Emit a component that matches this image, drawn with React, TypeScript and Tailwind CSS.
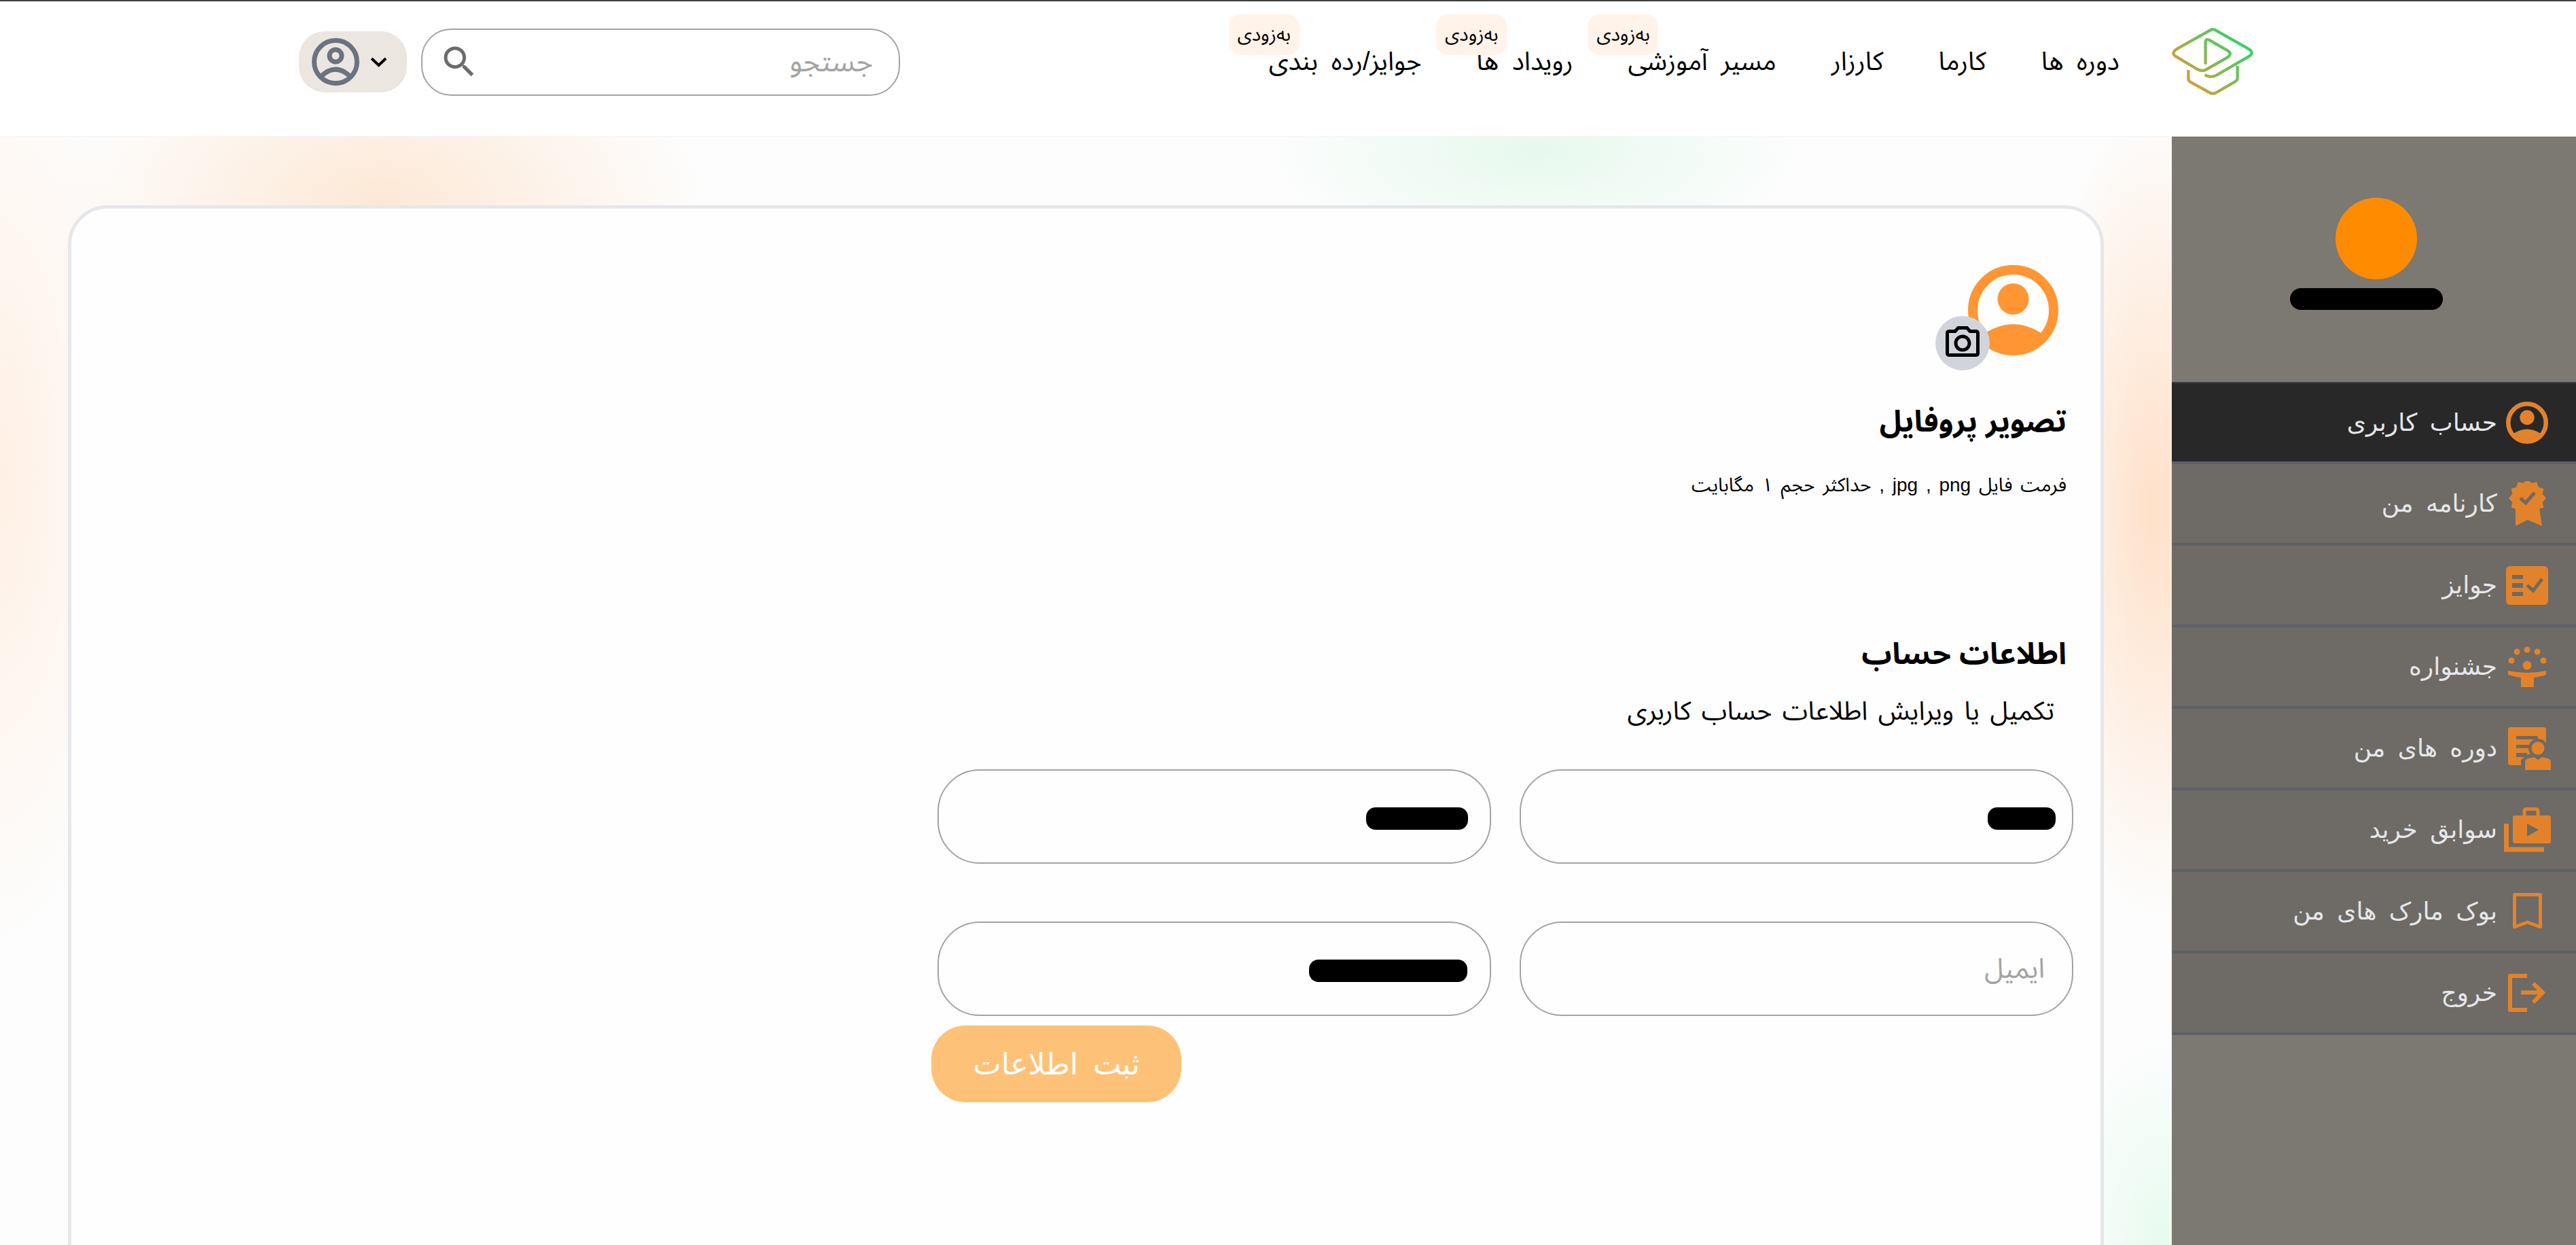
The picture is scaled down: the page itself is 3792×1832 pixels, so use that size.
import { MdOutlinePhotoCamera, MdSearch } from 'react-icons/md';

const navItems = [
  { label: 'دوره ها' },
  { label: 'کارما' },
  { label: 'کارزار' },
  { label: 'مسیر آموزشی', soon: true },
  { label: 'رویداد ها', soon: true },
  { label: 'جوایز/رده بندی', soon: true },
];

const burst = Array.from({ length: 24 }, (_, i) => {
  const r = i % 2 === 0 ? 27.5 : 23;
  const a = (i * Math.PI) / 12 - Math.PI / 2;
  return `${(27.5 + r * Math.cos(a)).toFixed(1)},${(25 + r * Math.sin(a)).toFixed(1)}`;
}).join(' ');

function Logo() {
  return (
    <svg viewBox="100 115 400 320" className="w-[133px] h-[106px] shrink-0" fill="none">
      <defs>
        <linearGradient id="logo" gradientUnits="userSpaceOnUse" x1="180" y1="420" x2="440" y2="180">
          <stop offset="0" stopColor="#e39a36" />
          <stop offset="1" stopColor="#2fd46e" />
        </linearGradient>
      </defs>
      <path
        d="M266 338 Q288 350 312 338 L455 255 Q484 238 455 220 L310 138 Q297 130 284 138 L135 222 Q108 240 135 256 L230 312 Q250 322 268 312 L362 258 Q385 242 362 228 L282 182 Q264 172 264 192 L264 284"
        stroke="url(#logo)"
        strokeWidth="13"
        strokeLinecap="round"
      />
      <path
        d="M188 314 V352 Q188 362 198 368 L285 416 Q298 422 310 416 L396 366 Q406 360 406 350 V295"
        stroke="url(#logo)"
        strokeWidth="13"
      />
    </svg>
  );
}

function UserSolid({ className }: { className: string }) {
  return (
    <svg viewBox="0 0 133 133" className={className} fill="currentColor">
      <circle cx="66.5" cy="66.5" r="59.5" fill="none" stroke="currentColor" strokeWidth="14" />
      <circle cx="66.5" cy="50" r="23" />
      <path d="M25 100 Q66.5 74 108 100 A53 53 0 0 1 25 100Z" />
    </svg>
  );
}

function UserOutline() {
  return (
    <svg viewBox="0 0 70 70" className="w-[70px] h-[70px]" fill="none" stroke="#6b7280" strokeWidth="7">
      <circle cx="35" cy="35" r="31.5" />
      <circle cx="35" cy="26" r="9" />
      <path d="M13 57 Q35 35 57 57" />
    </svg>
  );
}

function Ribbon() {
  return (
    <svg viewBox="0 0 55 66" className="w-[55px] h-[66px]">
      <path d="M10 40 H45 L49 66 L27.5 57 L10 66Z" fill="#e2832c" />
      <polygon points={burst} fill="#e2832c" />
      <path d="M17 25 L25 32 L38 17" fill="none" stroke="#6e6a65" strokeWidth="5" />
    </svg>
  );
}

function TasksBox() {
  return (
    <svg viewBox="0 0 62 57" className="w-[62px] h-[57px]">
      <rect width="62" height="57" rx="6" fill="#e2832c" />
      <path d="M9 13 H25 V19 H9Z M9 25 H25 V32 H9Z M9 38 H25 V44 H9Z" fill="#6e6a65" />
      <path d="M31 28 L40 36 L53 19" fill="none" stroke="#6e6a65" strokeWidth="5" />
    </svg>
  );
}

function Festival() {
  return (
    <svg viewBox="0 0 57 60" className="w-[57px] h-[60px]" fill="#e2832c">
      <circle cx="13" cy="8" r="4.5" />
      <circle cx="28" cy="5" r="4.5" />
      <circle cx="43" cy="8" r="4.5" />
      <circle cx="5" cy="21" r="4.5" />
      <circle cx="52" cy="21" r="4.5" />
      <circle cx="28" cy="28" r="6.5" />
      <path d="M0 36 Q14 39 28 39 Q42 39 56 36 V42 Q45 45 38 46 V60 H19 V46 Q10 45 0 42Z" />
    </svg>
  );
}

function Courses() {
  return (
    <svg viewBox="0 0 63 63" className="w-[63px] h-[63px] translate-x-[3px]">
      <rect width="56" height="56" rx="4" fill="#e2832c" />
      <path d="M12 13 H44 V18 H12Z M12 26 H34 V31 H12Z M12 38 H28 V44 H12Z" fill="#6e6a65" />
      <circle cx="44" cy="31" r="14" fill="#6e6a65" />
      <path d="M19 63 V48 L30 40 H56 V56 H63 V63Z" fill="#6e6a65" />
      <circle cx="44" cy="31" r="9.5" fill="#e2832c" />
      <path d="M25 63 V51 Q25 47 30 46 L38 44 L44 48 L50 44 L58 46 Q63 47 63 51 V63Z" fill="#e2832c" />
    </svg>
  );
}

function Briefcase() {
  return (
    <svg viewBox="0 0 69 66" className="w-[69px] h-[66px]">
      <rect x="30" y="2.5" width="20" height="12" rx="3" fill="none" stroke="#e2832c" strokeWidth="5" />
      <rect x="13" y="12" width="56" height="41" rx="3" fill="#e2832c" />
      <path d="M34 24 L51 33 L34 43Z" fill="#6e6a65" />
      <path d="M3.5 24 V62 H59" fill="none" stroke="#e2832c" strokeWidth="7" />
    </svg>
  );
}

function Bookmark() {
  return (
    <svg viewBox="0 0 43 55" className="w-[43px] h-[55px]">
      <path d="M2.5 50 V2.5 H40.5 V50 L21.5 43Z" fill="none" stroke="#e2832c" strokeWidth="5" strokeLinejoin="round" />
    </svg>
  );
}

function Logout() {
  return (
    <svg viewBox="0 0 56 56" className="w-[56px] h-[56px]" fill="none" stroke="#e2832c" strokeWidth="6">
      <path d="M28 3 H3 V53 H28" strokeLinejoin="round" />
      <path d="M19 27.5 H50 M37 14 L51 27.5 L37 42" />
    </svg>
  );
}

const sideItems = [
  { label: 'حساب کاربری', icon: <UserSolid className="w-[62px] h-[62px] text-[#e2832c]" />, active: true },
  { label: 'کارنامه من', icon: <Ribbon /> },
  { label: 'جوایز', icon: <TasksBox /> },
  { label: 'جشنواره', icon: <Festival /> },
  { label: 'دوره های من', icon: <Courses /> },
  { label: 'سوابق خرید', icon: <Briefcase /> },
  { label: 'بوک مارک های من', icon: <Bookmark /> },
  { label: 'خروج', icon: <Logout /> },
];

export default function App() {
  return (
    <div
      dir="rtl"
      className="h-screen overflow-hidden flex flex-col bg-[#fdfdfd] text-black font-['Liberation_Sans','Noto_Sans_Arabic',sans-serif]"
    >
      {/* Header */}
      <header className="h-[201px] shrink-0 bg-white border-t-2 border-[#404040] border-b border-b-[#f5f5f5] flex items-center pr-[473px] pl-[440px]">
        <div className="-mt-[22px] flex items-center ml-[72px]">
          <div className="-mr-[6px]">
            <Logo />
          </div>
        </div>
        <nav className="flex items-center gap-[81px] -mt-[22px]">
          {navItems.map((item) => (
            <div key={item.label} className="relative text-[38px] leading-[54px] whitespace-nowrap [word-spacing:9px]">
              {item.label}
              {item.soon && (
                <span className="absolute -left-[59px] -top-[42px] w-[104px] h-[60px] rounded-[18px] bg-[#fff3ea] flex items-center justify-center text-[28px] leading-none">
                  بەزودی
                </span>
              )}
            </div>
          ))}
        </nav>
        <div className="mr-auto flex items-center gap-[21px] -mt-[20px]">
          <div className="relative w-[705px] h-[99px]">
            <input
              placeholder="جستجو"
              className="w-full h-full rounded-[44px] border-2 border-[#a3a3a3] pr-[38px] text-[42px] outline-none placeholder:text-[#a3a3a3]"
            />
            <MdSearch className="absolute left-[26px] top-[19px] text-[#6b6b6b]" size={60} />
          </div>
          <div className="w-[159px] h-[90px] rounded-[38px] bg-[#ebe6e0] flex items-center justify-between pr-[29px] pl-[19px]" dir="ltr">
            <UserOutline />
            <svg viewBox="0 0 25 15" className="w-[25px] h-[15px]" fill="none" stroke="#000" strokeWidth="4">
              <path d="M2 2 L12.5 12 L23 2" />
            </svg>
          </div>
        </div>
      </header>

      <div className="flex-1 flex min-h-0">
        {/* Sidebar */}
        <aside className="w-[595px] shrink-0 bg-[#7c7872] text-[#e5e7eb] font-['DejaVu_Sans',sans-serif]">
          <div className="h-[361px] flex flex-col items-center pt-[90px] pl-[6px]">
            <div className="w-[120px] h-[120px] rounded-full bg-[#ff8c00]" />
            <div className="mt-[13px] -ml-[28px] w-[225px] h-[32px] rounded-[16px] bg-black" />
          </div>
          {sideItems.map((item) => (
            <div
              key={item.label}
              className={`h-[120px] flex items-center gap-[6px] pr-[34px] border-b-4 border-[#5d6068] text-[36px] [word-spacing:7px] ${
                item.active ? 'bg-[#282828] border-t-2 border-t-[#3a3d45] h-[121px]' : 'bg-[#6e6a65]'
              }`}
            >
              <div className="w-[76px] flex justify-center shrink-0">{item.icon}</div>
              <span>{item.label}</span>
            </div>
          ))}
        </aside>

        {/* Main */}
        <main className="flex-1 min-w-0 px-[100px] pt-[101px] bg-[radial-gradient(ellipse_480px_280px_at_560px_100px,#fde8d5,transparent),radial-gradient(ellipse_200px_700px_at_0px_500px,#fff0e4,transparent),radial-gradient(ellipse_400px_170px_at_2260px_20px,#e6f9ee,transparent),radial-gradient(ellipse_180px_600px_at_3170px_550px,#ffe0c8,transparent),radial-gradient(ellipse_150px_300px_at_3180px_1620px,#e8fbf0,transparent)]">
          <section className="h-[2000px] rounded-[58px] border-[5px] border-[#e5e7eb] bg-[#fefefe] pt-[83px] pr-[40px]">
            <div className="relative w-[133px] h-[133px] mr-[22px] text-[#ff9633]">
              <UserSolid className="w-[133px] h-[133px]" />
              <div className="absolute -left-[48px] top-[75px] w-[80px] h-[80px] rounded-full bg-[#d1d5db] flex items-center justify-center text-black">
                <MdOutlinePhotoCamera size={60} />
              </div>
            </div>

            <h2 className="mt-[64px] pr-[10px] text-[44px] leading-[66px] font-bold">تصویر پروفایل</h2>
            <p className="mt-[40px] pr-[10px] text-[28px] leading-[42px] [word-spacing:4px]">فرمت فایل jpg , png , حداکثر حجم ۱ مگابایت</p>

            <h2 className="mt-[194px] pr-[10px] text-[44px] leading-[66px] font-bold">اطلاعات حساب</h2>
            <p className="mt-[24px] pr-[28px] text-[38px] leading-[54px] [word-spacing:5px]">تکمیل یا ویرایش اطلاعات حساب کاربری</p>

            <div className="mt-[59px] grid grid-cols-[815px_815px] gap-x-[42px] gap-y-[85px]">
              <Field blob="w-[100px] right-[26px]" />
              <Field blob="w-[150px] right-[34px]" />
              <Field placeholder="ایمیل" />
              <Field blob="w-[233px] right-[35px]" />
            </div>
            <div className="flex justify-end pl-[1266px] mt-[14px]">
              <button className="w-[368px] h-[113px] rounded-[50px] bg-[#fdc278] text-white text-[44px] font-['DejaVu_Sans',sans-serif] [word-spacing:8px]">ثبت اطلاعات</button>
            </div>
          </section>
        </main>
      </div>
    </div>
  );
}

function Field({ placeholder, blob }: { placeholder?: string; blob?: string }) {
  return (
    <div className="relative h-[139px]">
      <input
        placeholder={placeholder}
        className="w-full h-full rounded-[62px] border-2 border-[#a3a3a3] pr-[40px] text-[40px] outline-none placeholder:text-[#a3a3a3]"
      />
      {blob && <div className={`absolute top-[56px] h-[33px] rounded-[14px] bg-black ${blob}`} />}
    </div>
  );
}
